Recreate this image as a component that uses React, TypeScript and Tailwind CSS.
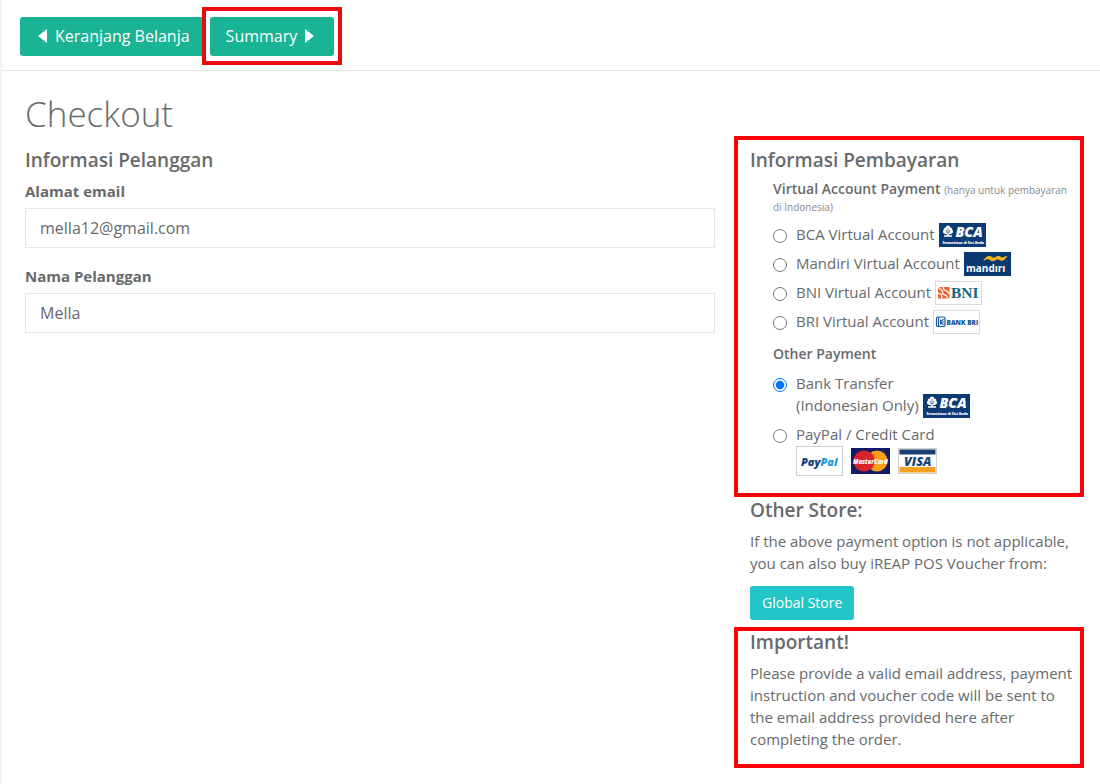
import { useState, type ReactNode } from "react";

const logoFont = "'Open Sans', 'Liberation Sans', sans-serif";

function BcaLogo() {
  return (
    <svg className="h-6 w-[47px] shrink-0" viewBox="0 0 47 24" role="img" aria-label="BCA">
      <rect width="47" height="24" fill="#0b3a75" />
      <path
        d="M9 2.500c1.300 0 2 .9 2 2 1.600-.2 2.600 1 2.200 2.500 1.300.9 1.200 2.900-.3 3.600l-2.700.7-.2 1h3v1.500H5v-1.500h3l-.2-1-2.700-.7c-1.500-.7-1.600-2.700-.3-3.600C4.400 5.500 5.400 4.300 7 4.500c0-1.100.7-2 2-2z"
        fill="#fff"
      />
      <path d="M9 5v6.500M7 7l1.200 3M11 7l-1.200 3" stroke="#0b3a75" strokeWidth=".6" fill="none" />
      <text x="16.500" y="14" fontFamily={logoFont} fontSize="14" fontWeight="800" fontStyle="italic" fill="#fff">BCA</text>
      <text x="3.500" y="20.500" fontFamily={logoFont} fontSize="3.500" fontWeight="800" fill="#fff">Senantiasa di Sisi Anda</text>
    </svg>
  );
}

function MandiriLogo() {
  return (
    <svg className="h-6 w-[47px] shrink-0" viewBox="0 0 47 24" role="img" aria-label="Mandiri">
      <rect width="47" height="24" fill="#0a3a70" />
      <path
        d="M19 8.800c2.500-3.500 4.500-5.300 7-4.800 2 .4 2.700 2.200 4.500 1.500 1.500-.6 2.500-2 4.500-1.500 1.700.4 2.300 2 4 1.300 1.200-.5 2-1.300 4.500-1.300-2 3-3.800 5-6.500 4.700-2-.3-2.500-1.700-4-1.300-1.800.5-2.500 2.100-4.800 1.700-2-.4-2.700-2.200-4.700-1.900-1.500.2-2.700 1.400-4.500 1.600z"
        fill="#f8b51e"
      />
      <text x="2" y="19.500" fontFamily={logoFont} fontSize="10" fontWeight="700" fill="#fff">mandırı</text>
    </svg>
  );
}

function BniLogo() {
  return (
    <svg className="h-6 w-[47px] shrink-0" viewBox="0 0 47 24" role="img" aria-label="BNI">
      <rect x=".5" y=".5" width="46" height="23" fill="#fff" stroke="#d6dcdd" />
      <rect x="3" y="6" width="11.500" height="11.500" fill="#e9622f" />
      <path d="M3 6l4 3.500 1 3.500 3 1.500 2 3M8 6l1 3 3 1 2.500 3M3 12l3.500 1.500L7 17.500" stroke="#fff" strokeWidth="1.300" fill="none" />
      <text x="16" y="17" fontFamily="'Liberation Serif', serif" fontSize="15.500" fontWeight="700" fill="#12677c">BNI</text>
    </svg>
  );
}

function BriLogo() {
  return (
    <svg className="h-6 w-[47px] shrink-0" viewBox="0 0 47 24" role="img" aria-label="Bank BRI">
      <rect x=".5" y=".5" width="46" height="23" fill="#fff" stroke="#d6dcdd" />
      <rect x="3.500" y="7" width="8.500" height="9.500" rx="1.500" fill="#fff" stroke="#14569c" strokeWidth="1.200" />
      <path d="M5.500 7v9.500M7.500 9.500v5M7.500 12l3-2.800M7.500 12l3 3M9.500 12h2" stroke="#14569c" strokeWidth="1.100" fill="none" />
      <text x="13.500" y="14.500" fontFamily={logoFont} fontSize="6.500" fontWeight="800" fill="#14569c">BANK BRI</text>
    </svg>
  );
}

function PayPalLogo() {
  return (
    <svg className="h-[30px] w-[47px]" viewBox="0 0 47 30" role="img" aria-label="PayPal">
      <rect x=".5" y=".5" width="46" height="29" fill="#fff" stroke="#c9ced1" />
      <text x="5" y="19.500" fontFamily={logoFont} fontSize="11" fontWeight="800" fontStyle="italic" fill="#173f80">
        Pay<tspan fill="#1f9bd8">Pal</tspan>
      </text>
    </svg>
  );
}

function MasterCardLogo() {
  return (
    <svg className="h-[26px] w-[39px]" viewBox="0 0 39 26" role="img" aria-label="MasterCard">
      <rect width="39" height="26" fill="#151a66" />
      <circle cx="26" cy="13" r="10.500" fill="#f9a01b" />
      <circle cx="13" cy="13" r="10.500" fill="#d9232a" />
      <path d="M19.500 7h4M19.500 9.500h4M19.500 17h4M19.500 19.500h3" stroke="#d9232a" strokeWidth="1" />
      <text x="2" y="15.500" fontFamily={logoFont} fontSize="6" fontWeight="800" fontStyle="italic" fill="#fff">MasterCard</text>
    </svg>
  );
}

function VisaLogo() {
  return (
    <svg className="h-[26px] w-[39px]" viewBox="0 0 39 26" role="img" aria-label="Visa">
      <rect x=".5" y=".5" width="38" height="25" fill="#fff" stroke="#c9ced1" />
      <rect x="1.500" y="1.500" width="36" height="5" fill="#1b3f73" />
      <rect x="1.500" y="19" width="36" height="5.500" fill="#f5a11c" />
      <text x="6" y="17.500" fontFamily={logoFont} fontSize="12.500" fontWeight="800" fontStyle="italic" fill="#1b3f73">VISA</text>
    </svg>
  );
}

type Option = { id: string; label: string; logo: ReactNode };

const virtualAccounts: Option[] = [
  { id: "bca", label: "BCA Virtual Account", logo: <BcaLogo /> },
  { id: "mandiri", label: "Mandiri Virtual Account", logo: <MandiriLogo /> },
  { id: "bni", label: "BNI Virtual Account", logo: <BniLogo /> },
  { id: "bri", label: "BRI Virtual Account", logo: <BriLogo /> },
];

function Radio({ id, value, onChange }: { id: string; value: string; onChange: (id: string) => void }) {
  return (
    <input
      id={id}
      type="radio"
      name="payment"
      checked={value === id}
      onChange={() => onChange(id)}
      className="mt-1.5 size-3.5 shrink-0"
    />
  );
}

function Field({ id, label, type, value }: { id: string; label: string; type: string; value: string }) {
  return (
    <div className="flex flex-col gap-1.5">
      <label htmlFor={id} className="font-bold">{label}</label>
      <input
        id={id}
        type={type}
        defaultValue={value}
        className="h-10 w-full border border-[#e5e6e7] bg-white px-3.5 text-base outline-none focus:border-[#1ab394]"
      />
    </div>
  );
}

export default function App() {
  const [payment, setPayment] = useState("transfer");

  return (
    <div className="min-h-screen border-l-2 border-[#f3f3f4] bg-white font-['Open_Sans','Liberation_Sans',sans-serif] text-[15px] leading-[22px] text-[#676a6c]">
      <header className="flex gap-1 border-b border-[#e7eaec] px-[18px] pt-[17px] pb-3.5">
        <button type="button" className="flex h-[39px] items-center gap-2 rounded-[3px] bg-[#1ab394] pr-4 pb-0.5 pl-[18px] text-base text-white">
          <svg className="h-3.5 w-[9px]" viewBox="0 0 9 14" aria-hidden="true"><path d="M9 0v14L0 7z" fill="currentColor" /></svg>
          Keranjang Belanja
        </button>
        <div className="relative">
          <button type="button" className="flex h-[39px] items-center gap-2 rounded-[3px] bg-[#1ab394] pr-5 pb-0.5 pl-4 text-base text-white">
            Summary
            <svg className="h-3.5 w-[9px]" viewBox="0 0 9 14" aria-hidden="true"><path d="M0 0v14l9-7z" fill="currentColor" /></svg>
          </button>
          <div className="pointer-events-none absolute -inset-x-2 -top-2.5 -bottom-[9px] border-4 border-[#e80c0f]" />
        </div>
      </header>

      <main className="pt-5 pr-4 pb-4 pl-[23px]">
        <h1 className="text-[35px] leading-[45px] font-light">Checkout</h1>
        <div className="grid grid-cols-[69fr_35fr] items-start gap-x-[19px]">
          <section className="pt-[13px]">
            <h2 className="text-[19px] leading-[22px] font-semibold">Informasi Pelanggan</h2>
            <div className="mt-[9px] flex flex-col gap-[17px]">
              <Field id="email" label="Alamat email" type="email" value="mella12@gmail.com" />
              <Field id="name" label="Nama Pelanggan" type="text" value="Mella" />
            </div>
          </section>

          <aside>
            <section className="border-4 border-[#fb0007] pt-[9px] pb-[17px] pl-3">
              <h2 className="text-[19px] leading-[22px] font-semibold">Informasi Pembayaran</h2>
              <div className="pl-[23px]">
                <h3 className="mt-[9px] pr-2 text-sm leading-[17px] font-semibold">
                  Virtual Account Payment{" "}
                  <small className="text-[10px] leading-none font-normal text-[#888b8d]">(hanya untuk pembayaran di Indonesia)</small>
                </h3>
                <div className="mt-[9px] flex flex-col gap-[5px]">
                  {virtualAccounts.map((option) => (
                    <div key={option.id} className="flex h-6 gap-[9px]">
                      <Radio id={option.id} value={payment} onChange={setPayment} />
                      <label htmlFor={option.id} className="flex gap-1">
                        {option.label}
                        {option.logo}
                      </label>
                    </div>
                  ))}
                </div>
                <h3 className="mt-[9px] text-sm leading-[22px] font-semibold">Other Payment</h3>
                <div className="mt-[7px] flex gap-[9px]">
                  <Radio id="transfer" value={payment} onChange={setPayment} />
                  <label htmlFor="transfer">
                    Bank Transfer
                    <span className="flex gap-1">
                      (Indonesian Only) <BcaLogo />
                    </span>
                  </label>
                </div>
                <div className="mt-[5px] flex gap-[9px]">
                  <Radio id="paypal" value={payment} onChange={setPayment} />
                  <label htmlFor="paypal">
                    PayPal / Credit Card
                    <span className="mt-px flex items-center gap-2">
                      <PayPalLogo />
                      <MasterCardLogo />
                      <VisaLogo />
                    </span>
                  </label>
                </div>
              </div>
            </section>

            <section className="pt-0.5 pr-1 pb-[7px] pl-4">
              <h2 className="text-[19px] leading-[22px] font-semibold">Other Store:</h2>
              <p className="mt-[9px]">
                If the above payment option is not applicable, you can also buy iREAP POS Voucher from:
              </p>
              <button type="button" className="mt-3 h-[34px] rounded-[3px] bg-[#23c6c8] px-3 text-sm text-white">
                Global Store
              </button>
            </section>

            <section className="border-4 border-[#fb0007] pb-3.5 pl-3">
              <h2 className="text-[19px] leading-[22px] font-semibold">Important!</h2>
              <p className="mt-[9px]">
                Please provide a valid email address, payment instruction and voucher code will be sent to the email address provided here after completing the order.
              </p>
            </section>
          </aside>
        </div>
      </main>
    </div>
  );
}
